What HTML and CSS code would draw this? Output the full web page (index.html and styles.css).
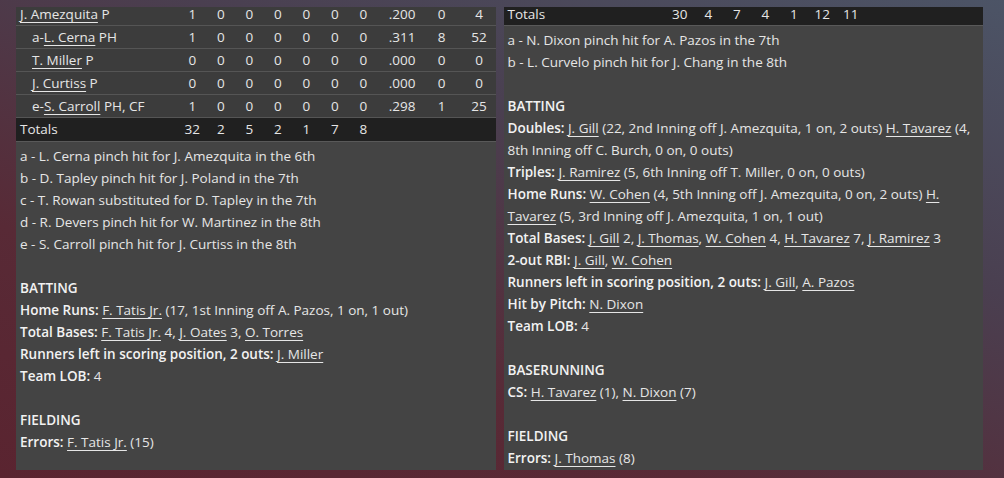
FILE: index.html
```html
<!DOCTYPE html>
<html lang="en">
<head>
    <meta charset="UTF-8">
    <title>Box Score</title>
    <link rel="stylesheet" href="styles.css">
</head>
<body>
    <div class="board">
        <div class="panel">
            <div class="box">
                <div class="row">
                    <div class="name"><a href="#">J. Amezquita</a> P</div>
                    <div>1</div><div>0</div><div>0</div><div>0</div><div>0</div><div>0</div><div>0</div><div>.200</div><div>0</div><div class="last">4</div>
                </div>
                <div class="row">
                    <div class="name sub">a-<a href="#">L. Cerna</a> PH</div>
                    <div>1</div><div>0</div><div>0</div><div>0</div><div>0</div><div>0</div><div>0</div><div>.311</div><div>8</div><div class="last">52</div>
                </div>
                <div class="row">
                    <div class="name sub"><a href="#">T. Miller</a> P</div>
                    <div>0</div><div>0</div><div>0</div><div>0</div><div>0</div><div>0</div><div>0</div><div>.000</div><div>0</div><div class="last">0</div>
                </div>
                <div class="row">
                    <div class="name sub"><a href="#">J. Curtiss</a> P</div>
                    <div>0</div><div>0</div><div>0</div><div>0</div><div>0</div><div>0</div><div>0</div><div>.000</div><div>0</div><div class="last">0</div>
                </div>
                <div class="row">
                    <div class="name sub">e-<a href="#">S. Carroll</a> PH, CF</div>
                    <div>1</div><div>0</div><div>0</div><div>0</div><div>0</div><div>0</div><div>0</div><div>.298</div><div>1</div><div class="last">25</div>
                </div>
                <div class="row totals">
                    <div class="name">Totals</div>
                    <div>32</div><div>2</div><div>5</div><div>2</div><div>1</div><div>7</div><div>8</div>
                </div>
            </div>
            <div class="notes">
                <p>a - L. Cerna pinch hit for J. Amezquita in the 6th</p>
                <p>b - D. Tapley pinch hit for J. Poland in the 7th</p>
                <p>c - T. Rowan substituted for D. Tapley in the 7th</p>
                <p>d - R. Devers pinch hit for W. Martinez in the 8th</p>
                <p>e - S. Carroll pinch hit for J. Curtiss in the 8th</p>
                <p class="gap"></p>
                <p class="head">BATTING</p>
                <p><b>Home Runs:</b> <a href="#">F. Tatis Jr.</a> (17, 1st Inning off A. Pazos, 1 on, 1 out)</p>
                <p><b>Total Bases:</b> <a href="#">F. Tatis Jr.</a> 4, <a href="#">J. Oates</a> 3, <a href="#">O. Torres</a></p>
                <p><b>Runners left in scoring position, 2 outs:</b> <a href="#">J. Miller</a></p>
                <p><b>Team LOB:</b> 4</p>
                <p class="gap"></p>
                <p class="head">FIELDING</p>
                <p><b>Errors:</b> <a href="#">F. Tatis Jr.</a> (15)</p>
            </div>
        </div>
        <div class="panel">
            <div class="box">
                <div class="row totals">
                    <div class="name">Totals</div>
                    <div>30</div><div>4</div><div>7</div><div>4</div><div>1</div><div>12</div><div>11</div>
                </div>
            </div>
            <div class="notes">
                <p>a - N. Dixon pinch hit for A. Pazos in the 7th</p>
                <p>b - L. Curvelo pinch hit for J. Chang in the 8th</p>
                <p class="gap"></p>
                <p class="head">BATTING</p>
                <p><b>Doubles:</b> <a href="#">J. Gill</a> (22, 2nd Inning off J. Amezquita, 1 on, 2 outs) <a href="#">H. Tavarez</a> (4, 8th Inning off C. Burch, 0 on, 0 outs)</p>
                <p><b>Triples:</b> <a href="#">J. Ramirez</a> (5, 6th Inning off T. Miller, 0 on, 0 outs)</p>
                <p><b>Home Runs:</b> <a href="#">W. Cohen</a> (4, 5th Inning off J. Amezquita, 0 on, 2 outs) <a href="#">H. Tavarez</a> (5, 3rd Inning off J. Amezquita, 1 on, 1 out)</p>
                <p><b>Total Bases:</b> <a href="#">J. Gill</a> 2, <a href="#">J. Thomas</a>, <a href="#">W. Cohen</a> 4, <a href="#">H. Tavarez</a> 7, <a href="#">J. Ramirez</a> 3</p>
                <p><b>2-out RBI:</b> <a href="#">J. Gill</a>, <a href="#">W. Cohen</a></p>
                <p><b>Runners left in scoring position, 2 outs:</b> <a href="#">J. Gill</a>, <a href="#">A. Pazos</a></p>
                <p><b>Hit by Pitch:</b> <a href="#">N. Dixon</a></p>
                <p><b>Team LOB:</b> 4</p>
                <p class="gap"></p>
                <p class="head">BASERUNNING</p>
                <p><b>CS:</b> <a href="#">H. Tavarez</a> (1), <a href="#">N. Dixon</a> (7)</p>
                <p class="gap"></p>
                <p class="head">FIELDING</p>
                <p><b>Errors:</b> <a href="#">J. Thomas</a> (8)</p>
            </div>
        </div>
    </div>
</body>
</html>
```
FILE: styles.css
```css
html, body {
    height: 100%;
}
body {
    margin: 0;
    color: #e6e6e6;
    font-family: "Open Sans", "Noto Sans", sans-serif;
    font-size: 13.5px;
    background: linear-gradient(200deg, #4c5466 0%, #4a3f50 35%, #582a36 70%, #5a2430 100%);
    overflow: hidden;
}
.board {
    display: flex;
    gap: 8px;
    height: 100%;
    box-sizing: border-box;
    padding: 7px 21px 8px 16px;
}
.panel {
    flex: 1;
    background-color: #444;
    overflow: hidden;
}
.row {
    display: grid;
    grid-template-columns: 162px repeat(7, 28.5px) 49px 30px 1fr;
    height: 22px;
    line-height: 22px;
    background-color: #3c3c3c;
    border-bottom: 1px solid #555;
    text-align: center;
}
.box .row:first-child {
    height: 18px;
    line-height: 15px;
}
.row .name {
    text-align: left;
    padding-left: 4px;
    white-space: nowrap;
}
.row .name.sub {
    padding-left: 16px;
}
.row .last {
    padding-left: 6px;
}
.row.totals {
    height: 23px;
    line-height: 23px;
    background-color: #202020;
    border-bottom-color: #595959;
}
.notes {
    padding: 3px 4px 0 4px;
}
.notes p {
    margin: 0;
    line-height: 22px;
}
.notes .gap {
    height: 22px;
}
.notes .head,
.notes b {
    font-weight: 600;
    color: #f2f2f2;
}
a {
    color: inherit;
    text-decoration: underline;
    text-underline-offset: 3px;
}
```
